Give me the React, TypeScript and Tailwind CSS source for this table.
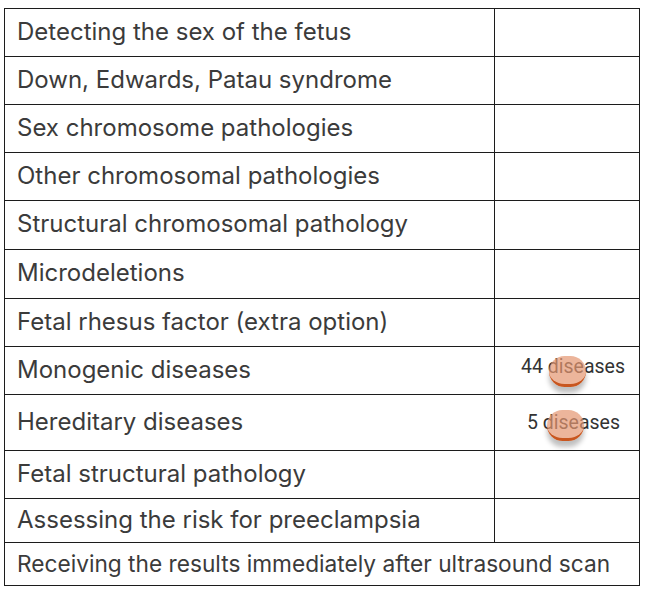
const ROWS = [
  { label: "Detecting the sex of the fetus", h: "h-[48px]" },
  { label: "Down, Edwards, Patau syndrome", h: "h-[48px]" },
  { label: "Sex chromosome pathologies", h: "h-[48px]" },
  { label: "Other chromosomal pathologies", h: "h-[48px]" },
  { label: "Structural chromosomal pathology", h: "h-[49px]" },
  { label: "Microdeletions", h: "h-[49px]" },
  { label: "Fetal rhesus factor (extra option)", h: "h-[48px]" },
  { label: "Monogenic diseases", h: "h-[48px]", note: "44 diseases" },
  { label: "Hereditary diseases", h: "h-[56px]", note: "5 diseases" },
  { label: "Fetal structural pathology", h: "h-[48px]" },
  { label: "Assessing the risk for preeclampsia", h: "h-[44px]" },
];

function Blob({ className }: { className: string }) {
  return (
    <span
      className={`pointer-events-none absolute h-[31px] w-[37px] rounded-full border-b-[3px] border-[#c8561f] bg-[rgba(228,150,112,0.7)] shadow-[0_6px_5px_rgba(0,0,0,0.25)] ${className}`}
    />
  );
}

export default function App() {
  return (
    <div className="min-h-[591px] bg-white pl-[4px] pt-[8px] font-['Inter',sans-serif] text-[#3b3b3b]">
      <div className="w-[636px] border-[1.5px] border-[#1c1c1c]">
        {ROWS.map((r) => (
          <div key={r.label} className={`flex ${r.h} border-b-[1.5px] border-[#1c1c1c]`}>
            <div className="flex w-[490px] items-center border-r-[1.5px] border-[#1c1c1c] pb-[2px] pl-[12px] text-[24px]">
              {r.label}
            </div>
            <div className="relative flex flex-1 items-center">
              {r.note === "44 diseases" && (
                <>
                  <span className="-mt-[8px] ml-[26px] font-['Roboto',sans-serif] text-[19.5px] text-[#333]">
                    {r.note}
                  </span>
                  <Blob className="left-[54px] top-[9px]" />
                </>
              )}
              {r.note === "5 diseases" && (
                <>
                  <span className="ml-[32px] font-['Roboto',sans-serif] text-[19.5px] text-[#333]">
                    {r.note}
                  </span>
                  <Blob className="left-[52px] top-[15px]" />
                </>
              )}
            </div>
          </div>
        ))}
        <div className="flex h-[42px] items-center pl-[12px] text-[22.7px]">
          Receiving the results immediately after ultrasound scan
        </div>
      </div>
    </div>
  );
}
